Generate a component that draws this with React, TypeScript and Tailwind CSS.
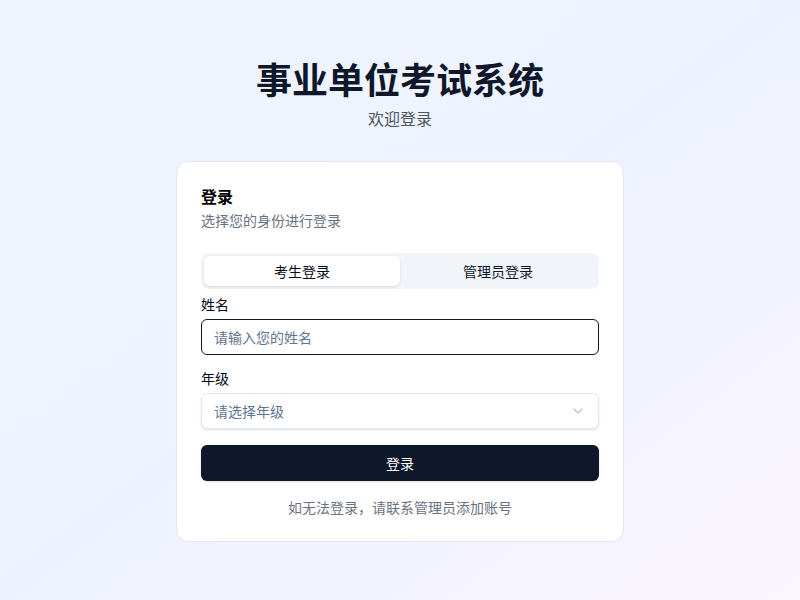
import { useState } from "react";

const FONT = { fontFamily: '"Noto Sans CJK SC", "Noto Sans", sans-serif' };

function ChevronDown() {
  return (
    <svg className="h-4 w-4 text-slate-400 opacity-60" fill="none" viewBox="0 0 24 24" stroke="currentColor" strokeWidth={2}>
      <path strokeLinecap="round" strokeLinejoin="round" d="m6 9 6 6 6-6" />
    </svg>
  );
}

export default function App() {
  const [role, setRole] = useState<"student" | "admin">("student");

  return (
    <div
      className="min-h-screen w-full flex items-center justify-center bg-gradient-to-br from-blue-50 via-indigo-50 to-purple-50"
      style={FONT}
    >
      <div className="w-[448px]">
        {/* Header */}
        <div className="text-center mb-[31px]">
          <h1 className="text-4xl font-bold text-slate-900">事业单位考试系统</h1>
          <p className="mt-2 text-base text-gray-600">欢迎登录</p>
        </div>

        {/* Card */}
        <div className="rounded-xl border border-[#e2e6f0] bg-white">
          <div className="p-6 pb-[23px]">
            <h2 className="text-base leading-5 font-semibold text-black">登录</h2>
            <p className="mt-1 text-sm text-gray-500">选择您的身份进行登录</p>
          </div>

          <div className="px-6 pb-6">
            {/* Tabs */}
            <div className="grid grid-cols-2 h-9 rounded-lg bg-slate-100 p-[3px]">
              <button
                onClick={() => setRole("student")}
                className={`rounded-md text-sm ${
                  role === "student" ? "bg-white text-slate-950 shadow-sm" : "text-slate-900"
                }`}
              >
                考生登录
              </button>
              <button
                onClick={() => setRole("admin")}
                className={`rounded-md text-sm ${
                  role === "admin" ? "bg-white text-slate-950 shadow-sm" : "text-slate-900"
                }`}
              >
                管理员登录
              </button>
            </div>

            <div className="mt-2 space-y-4">
              <div className="space-y-2">
                <label className="block text-sm leading-none text-slate-950">姓名</label>
                <input
                  className="flex h-9 w-full rounded-md border border-slate-900 bg-white px-3 text-sm text-slate-900 placeholder:text-slate-500 outline-none"
                  placeholder="请输入您的姓名"
                />
              </div>

              <div className="space-y-2">
                <label className="block text-sm leading-none text-slate-950">年级</label>
                <button className="flex h-9 w-full items-center justify-between rounded-md border border-slate-200 bg-white px-3 text-sm text-slate-500 shadow-sm">
                  <span>请选择年级</span>
                  <ChevronDown />
                </button>
              </div>

              <button className="flex h-9 w-full items-center justify-center rounded-md bg-slate-900 text-sm text-white shadow">
                登录
              </button>
            </div>

            <p className="mt-4 text-center text-sm text-gray-500">如无法登录，请联系管理员添加账号</p>
          </div>
        </div>
      </div>
    </div>
  );
}
